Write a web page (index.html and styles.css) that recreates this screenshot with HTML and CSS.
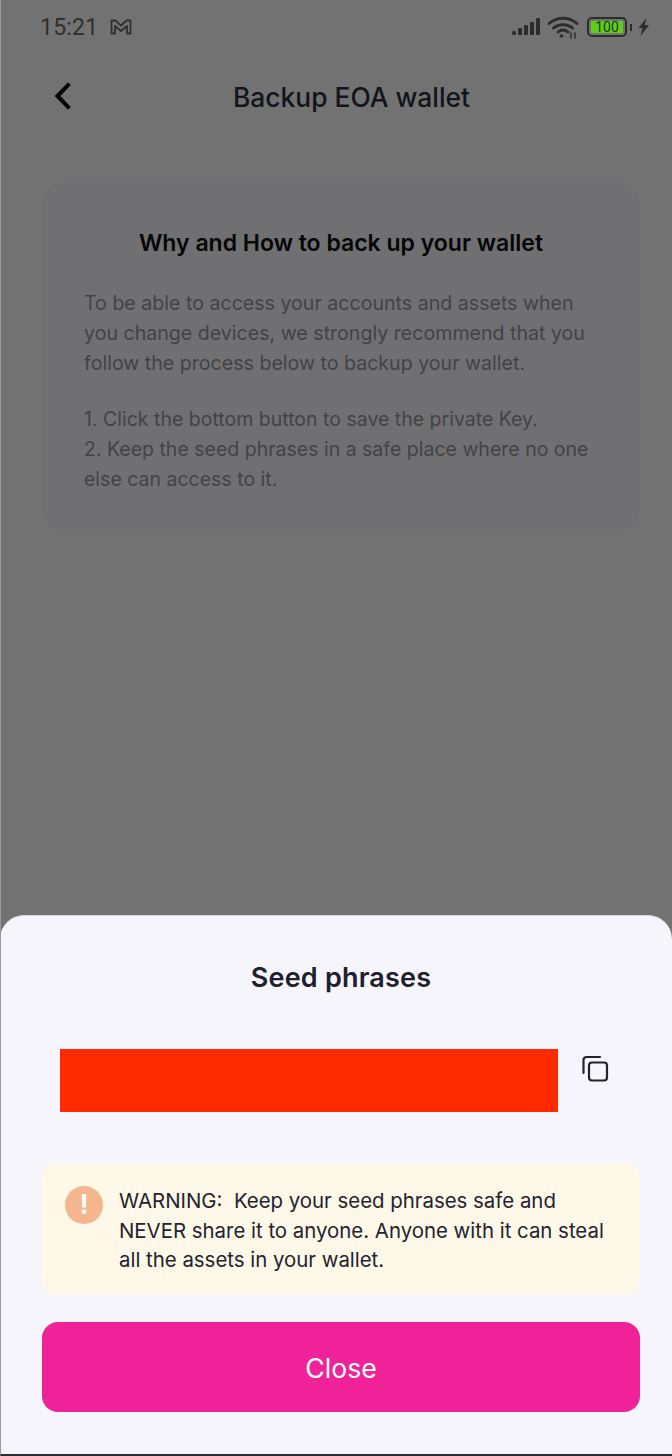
FILE: index.html
```html
<!DOCTYPE html>
<html>
  <head>
    <meta charset="utf-8" />
    <title>Backup EOA wallet</title>
    <link rel="stylesheet" href="styles.css">
  </head>
  <body>
    <div class="screen">
      <div class="status-bar">
        <span class="clock">15:21</span>
        <svg class="mail-icon" width="22" height="16" viewBox="0 0 22 16" fill="none" stroke="#2f2f2f" stroke-width="1.8" stroke-linejoin="round">
          <path d="M1.500 1.500h4l5.500 5 5.500-5h4v13h-3.500v-7.500l-6 5-6-5v7.500h-3.500z" />
        </svg>
        <div class="status-icons">
          <svg width="29" height="20" viewBox="0 0 29 20" fill="#2c2c2c">
            <rect x="0" y="14" width="4" height="4" rx="1.500" />
            <rect x="6" y="11" width="4" height="7" rx="1" />
            <rect x="12" y="8" width="4" height="10" rx="1" />
            <rect x="18" y="5" width="4" height="13" rx="1" />
            <rect x="24" y="1" width="4" height="17" rx="1" />
          </svg>
          <svg width="32" height="24" viewBox="0 0 32 24" fill="none" stroke="#2c2c2c" stroke-width="2.800" stroke-linecap="round">
            <path d="M2 8.500c8-7 20-7 28 0" />
            <path d="M6.500 13c5.500-4.500 13.500-4.500 19 0" />
            <path d="M11 17c3-2.400 7-2.400 10 0" />
            <circle cx="14.500" cy="21" r="1.800" fill="#2c2c2c" stroke="none" />
            <path d="M24 18v5M28 18v5" stroke-width="1.400" />
          </svg>
          <div class="battery"><span class="battery-level">100</span></div>
          <span class="battery-tip"></span>
          <svg width="12" height="18" viewBox="0 0 12 18" fill="#2c2c2c">
            <path d="M8.500 0 0.500 10h4l-2 8 8.500-11h-4.500z" />
          </svg>
        </div>
      </div>

      <div class="nav-bar">
        <svg class="back-icon" width="18" height="28" viewBox="0 0 18 28" fill="none" stroke="#050505" stroke-width="4" stroke-linecap="square">
          <path d="M14 3 3.500 14 14 25" />
        </svg>
        <h1 class="nav-title">Backup EOA wallet</h1>
      </div>

      <div class="info-card">
        <h2 class="info-title">Why and How to back up your wallet</h2>
        <p class="info-text">To be able to access your accounts and assets when you change devices, we strongly recommend that you follow the process below to backup your wallet.</p>
        <p class="info-text info-steps">1. Click the bottom button to save the private Key.<br>2. Keep the seed phrases in a safe place where no one else can access to it.</p>
      </div>

      <div class="sheet">
        <h2 class="sheet-title">Seed phrases</h2>
        <div class="seed-row">
          <div class="seed-hidden"></div>
          <svg class="copy-icon" width="28" height="28" viewBox="0 0 28 28" fill="none" stroke="#23232f" stroke-width="2.200" stroke-linecap="round" stroke-linejoin="round">
            <path d="M2.500 18V5a3 3 0 0 1 3-3h13.500" />
            <rect x="8" y="7.500" width="18" height="18" rx="3" />
          </svg>
        </div>
        <div class="warning">
          <div class="warning-icon"><span class="warning-mark">!</span></div>
          <p class="warning-text">WARNING:&nbsp; Keep your seed phrases safe and NEVER share it to anyone. Anyone with it can steal all the assets in your wallet.</p>
        </div>
        <button class="close-btn">Close</button>
      </div>
    </div>
  </body>
</html>
```

FILE: styles.css
```css
* {
  box-sizing: border-box;
}
body {
  margin: 0;
  font-family: Inter, "Noto Sans", sans-serif;
}
h1, h2, p {
  margin: 0;
}
.screen {
  width: 672px;
  height: 1456px;
  display: flex;
  flex-direction: column;
  background-color: #727272;
  border-left: 1px solid #9a9a9a;
  border-bottom: 2px solid #2c2c30;
  overflow: hidden;
}
.status-bar {
  display: flex;
  align-items: center;
  height: 54px;
  padding: 0 22px 0 39px;
}
.clock {
  font-family: Roboto, sans-serif;
  font-size: 23px;
  letter-spacing: 0.2px;
  color: #2f2f2f;
}
.mail-icon {
  margin-left: 12px;
}
.status-icons {
  display: flex;
  align-items: center;
  margin-left: auto;
  gap: 6px;
}
.battery {
  width: 40px;
  height: 20px;
  padding: 2px;
  border: 2px solid #2c2c2c;
  border-radius: 5px;
  margin-left: 2px;
}
.battery-level {
  display: block;
  height: 12px;
  font-family: Roboto, sans-serif;
  font-size: 14px;
  line-height: 12px;
  text-align: center;
  color: #1c3a08;
  background-color: #5fce1a;
}
.battery-tip {
  width: 2px;
  height: 7px;
  margin-left: -3px;
  background-color: #2c2c2c;
}
.nav-bar {
  position: relative;
  height: 86px;
  display: flex;
  align-items: center;
  justify-content: center;
}
.back-icon {
  position: absolute;
  left: 53px;
  top: 28px;
}
.nav-title {
  padding-left: 30px;
  font-size: 26.400px;
  font-weight: 500;
  color: #14141c;
}
.info-card {
  width: 598px;
  height: 350px;
  margin: 42px 0 0 41px;
  padding: 46px 42px 0;
  background-color: #707072;
  border-radius: 24px;
}
.info-title {
  font-size: 23px;
  font-weight: 600;
  line-height: 30px;
  text-align: center;
  color: #050505;
}
.info-text {
  margin-top: 30px;
  font-size: 19.600px;
  line-height: 30px;
  color: #434345;
}
.info-steps {
  margin-top: 26px;
  font-size: 19.500px;
}
.sheet {
  margin-top: auto;
  margin-left: -1px;
  height: 539px;
  padding: 0 32px 0 42px;
  background-color: #f5f5fb;
  border-radius: 24px 24px 0 0;
  border-top: 1px solid #d8d8dc;
}
.sheet-title {
  padding: 45px 0 0;
  font-size: 27px;
  font-weight: 600;
  letter-spacing: 0.2px;
  line-height: 34px;
  text-align: center;
  color: #20202c;
}
.seed-row {
  display: flex;
  align-items: flex-start;
  margin-top: 54px;
  padding-left: 18px;
}
.seed-hidden {
  width: 498px;
  height: 63px;
  background-color: #ff2a00;
}
.copy-icon {
  margin: 6px 0 0 23px;
}
.warning {
  display: flex;
  width: 598px;
  height: 132px;
  margin-top: 51px;
  padding: 23px 20px 0 23px;
  background-color: #fef8e9;
  border-radius: 14px;
}
.warning-icon {
  flex: none;
  width: 38px;
  height: 38px;
  display: flex;
  align-items: center;
  justify-content: center;
  background-color: #f5b58d;
  border-radius: 50%;
}
.warning-mark {
  font-size: 27px;
  font-weight: 700;
  line-height: 38px;
  color: #fff;
}
.warning-text {
  margin-left: 16px;
  font-size: 20.400px;
  line-height: 29.500px;
  color: #23232f;
}
.close-btn {
  display: block;
  width: 598px;
  height: 90px;
  margin-top: 27px;
  padding-top: 3px;
  font-family: Inter, "Noto Sans", sans-serif;
  font-size: 26.700px;
  color: #fff;
  background-color: #ef2299;
  border: none;
  border-radius: 16px;
  cursor: pointer;
}
```
